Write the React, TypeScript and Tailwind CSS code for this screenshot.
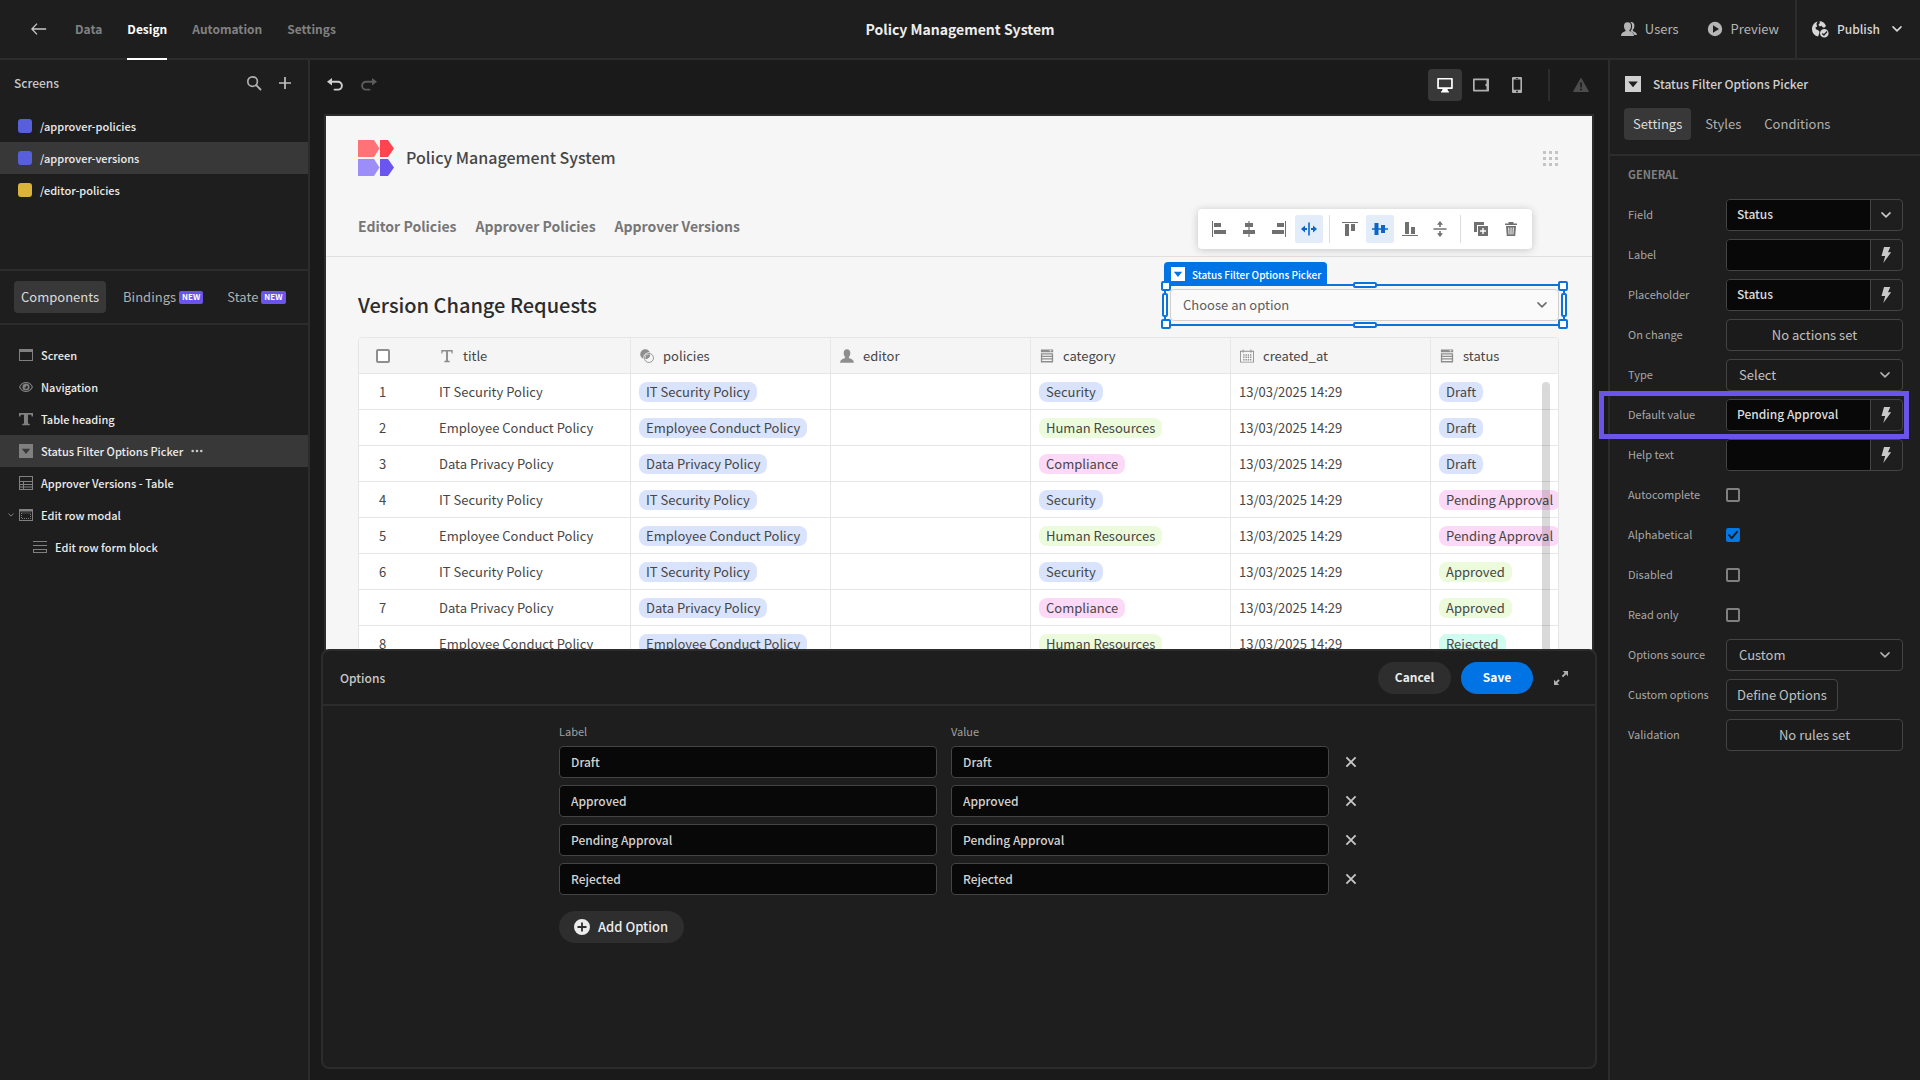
import type { ReactNode } from "react";

type IconProps = { className?: string };

function Icon({ className = "size-4", children, box = 16 }: IconProps & { children: ReactNode; box?: number }) {
  return (
    <svg viewBox={`0 0 ${box} ${box}`} className={`shrink-0 ${className}`} fill="currentColor" aria-hidden="true">
      {children}
    </svg>
  );
}

const Chevron = ({ className = "size-4" }: IconProps) => (
  <Icon className={className}>
    <path d="M3.4 5.6 8 10.2l4.6-4.6" fill="none" stroke="currentColor" strokeWidth="1.8" strokeLinecap="round" strokeLinejoin="round" />
  </Icon>
);
const ArrowLeft = () => (
  <Icon className="size-4">
    <path d="M15.200 8H1.200M6 2.600.9 8 6 13.400" fill="none" stroke="currentColor" strokeWidth="1.300" />
  </Icon>
);
const UsersIcon = () => (
  <Icon className="size-4">
    <path d="M10 1c2.300 0 3.700 1.700 3.400 4.200-.2 1.900-.9 2.900-1.500 3.600-.3.5-.2 1.100.3 1.400 1.800.8 3.600 1.400 3.800 3.800h-2.600c-.5-2-2-2.900-4-3.800.9-1 1.700-2.700 1.700-4.900 0-2.200-.8-3.600-2.200-4.200.3-.1.700-.1 1.100-.1z" />
    <path d="M6.500 1.300c2.400 0 3.700 1.600 3.500 4.100-.1 1.700-.8 2.800-1.400 3.500-.4.600-.3 1.200.3 1.400 2.200 1 3.900 1.700 4.100 4.700H0c.2-3 1.900-3.700 4.100-4.700.6-.2.700-.8.3-1.400C3.800 8.200 3.100 7.100 3 5.400c-.2-2.500 1.100-4.100 3.500-4.100z" />
  </Icon>
);
const UserIcon = ({ className = "size-4" }: IconProps) => (
  <Icon className={className}>
    <path d="M8 .3c2.600 0 4 2 3.800 4.700-.1 1.800-.8 3-1.500 3.900-.4.600-.3 1.400.4 1.600 2.600.9 5 1.600 5.200 5.200H.1c.2-3.600 2.600-4.300 5.200-5.200.7-.2.8-1 .4-1.600-.7-.9-1.400-2.100-1.500-3.900C4 2.300 5.400.3 8 .3z" />
  </Icon>
);
const PlayCircle = () => (
  <Icon className="size-4">
    <path fillRule="evenodd" d="M8 .8a7.200 7.200 0 1 0 0 14.400A7.200 7.200 0 0 0 8 .8zM6 4.300v7.400L12 8z" />
  </Icon>
);
const GlobeCheck = () => (
  <Icon className="size-[18px]" box={18}>
    <path d="M8.400 1.200A7.200 7.200 0 0 1 15 6l-1.800 1.800-1.700-.6-.8-1.500-2 .7L7.400 4.800 8.900 3z" />
    <path d="M6.600 1.600 5.400 4 6.200 6.500 4.400 7.600 5 9.300l2.200 1 1.300 1.500-.4 2-1 2.600A7.300 7.300 0 0 1 1 9.200C1 5.300 3.400 2.400 6.600 1.600z" />
    <path fillRule="evenodd" d="M13.300 9a4.300 4.300 0 1 0 0 8.600 4.300 4.300 0 0 0 0-8.600zm2.300 2.100.9.800-3.500 4-2.200-2 .8-.9 1.300 1.100z" />
  </Icon>
);
const SearchIcon = () => (
  <Icon className="size-4">
    <circle cx="6.600" cy="6.600" r="4.800" fill="none" stroke="currentColor" strokeWidth="1.700" />
    <path d="m10.200 10.200 4.300 4.300" stroke="currentColor" strokeWidth="1.900" strokeLinecap="round" />
  </Icon>
);
const PlusIcon = () => (
  <Icon className="size-4">
    <path d="M8 2v12M2 8h12" stroke="currentColor" strokeWidth="1.700" />
  </Icon>
);
const UndoIcon = ({ className = "size-4" }: IconProps) => (
  <Icon className={className}>
    <path d="M5 1v7.600L0 4.800z" />
    <path d="M4 4.800h7a3.900 3.900 0 0 1 0 7.800H7.500" fill="none" stroke="currentColor" strokeWidth="1.900" strokeLinecap="round" />
  </Icon>
);
const DesktopIcon = () => (
  <Icon className="size-4">
    <path fillRule="evenodd" d="M1 1h14a.8.8 0 0 1 .8.8v9.400a.8.8 0 0 1-.8.800h-4.500l.5 2 1 .5v1H4v-1l1-.5.5-2H1a.8.8 0 0 1-.8-.8V1.800A.8.8 0 0 1 1 1zm.9 1.600v7.700h12.200V2.600z" />
  </Icon>
);
const TabletIcon = () => (
  <Icon className="size-4">
    <path fillRule="evenodd" d="M.8 1.500h14.400a.8.8 0 0 1 .8.800v11.400a.8.800 0 0 1-.8.8H.8a.8.8 0 0 1-.8-.8V2.300a.8.8 0 0 1 .8-.8zm.9 1.700v9.600h11.800V9.200a1.200 1.200 0 0 1 0-2.400V3.200z" />
  </Icon>
);
const PhoneIcon = () => (
  <Icon className="size-4">
    <path fillRule="evenodd" d="M4 0h8a1 1 0 0 1 1 1v14a1 1 0 0 1-1 1H4a1 1 0 0 1-1-1V1a1 1 0 0 1 1-1zm.6 2.400v10.400h6.800V2.400zM6.800 1v.7h2.400V1zM8 13.600a.9.900 0 1 0 0 1.800.9.9 0 0 0 0-1.800z" />
  </Icon>
);
const WarningIcon = () => (
  <Icon className="size-4">
    <path fillRule="evenodd" d="M8.600 1.400 15.700 14a.7.7 0 0 1-.6 1H.9a.7.7 0 0 1-.6-1L7.400 1.400a.7.7 0 0 1 1.200 0zM7.100 5.400l.2 5h1.400l.2-5zM8 11.400a1 1 0 1 0 0 2 1 1 0 0 0 0-2z" />
  </Icon>
);
const PickerIcon = ({ className = "size-4" }: IconProps) => (
  <Icon className={className}>
    <path fillRule="evenodd" d="M0 0h16v16H0zM3.200 5.500 8 11.300l4.800-5.800z" />
  </Icon>
);
const ScreenIcon = () => (
  <Icon className="size-[14px]" box={14}>
    <path fillRule="evenodd" d="M0 1h14v12H0zm1 3v8h12V4z" />
  </Icon>
);
const EyeIcon = () => (
  <Icon className="size-[14px]" box={14}>
    <path d="M.6 7C2 4 4.300 2.500 7 2.500S12 4 13.400 7C12 10 9.700 11.500 7 11.500S2 10 .6 7z" fill="none" stroke="currentColor" strokeWidth="1.100" />
    <path fillRule="evenodd" d="M7 3.400a3.600 3.600 0 1 0 0 7.200 3.600 3.600 0 0 0 0-7.200zm.2 2A1.700 1.700 0 1 1 5.500 7.400l1.700-.2z" />
  </Icon>
);
const HeadingIcon = () => (
  <Icon className="size-[14px]">
    <path d="M0 1h16v4h-1.500L14 3.200h-3.700v9.800l2 .7v1.300H3.700v-1.300l2-.7V3.200H2L1.500 5H0z" />
  </Icon>
);
const TextIcon = ({ className = "size-4" }: IconProps) => (
  <Icon className={className}>
    <path d="M1.500 1h13v4h-1.200l-.5-2.200H9.100v10.400l2 .6v1.200H4.900v-1.200l2-.6V2.800H3.200L2.700 5H1.500z" />
  </Icon>
);
const TableIcon = () => (
  <Icon className="size-[14px]" box={14}>
    <path fillRule="evenodd" d="M0 0h14v14H0zm1 1v4h12V1zm0 5v2h3V6zm4 0v2h8V6zM1 9v1.500h3V9zm4 0v1.500h8V9zm-4 2.500V13h3v-1.500zm4 0V13h8v-1.500z" />
  </Icon>
);
const ModalIcon = () => (
  <Icon className="size-[14px]" box={14}>
    <path fillRule="evenodd" d="M0 1h14v12H0zm1 2.500V12h12V3.500z" />
    <path d="M2.500 5h9v5.500h-9z" fill="none" stroke="currentColor" strokeDasharray="1 1" />
  </Icon>
);
const FormIcon = () => (
  <Icon className="size-[14px]" box={14}>
    <path fillRule="evenodd" d="M0 1h14v1H0zm0 4h14v1H0zm0 4h14v4H0zm1 1v2h12v-2z" />
  </Icon>
);
const Ellipsis = () => (
  <Icon className="size-3" box={12}>
    <circle cx="1.700" cy="6" r="1.300" /><circle cx="6" cy="6" r="1.300" /><circle cx="10.300" cy="6" r="1.300" />
  </Icon>
);
const RelationIcon = ({ className = "size-4" }: IconProps) => (
  <Icon className={className}>
    <circle cx="6" cy="6" r="5.700" />
    <circle cx="10.200" cy="10.200" r="5.200" fill="none" stroke="#f5f5f5" strokeWidth="2.600" />
    <circle cx="10.200" cy="10.200" r="5.200" fill="none" stroke="currentColor" strokeWidth="1" />
    <path d="M11.400 6.300a5.500 5.500 0 0 1-5 5.100A4.600 4.600 0 0 1 11.400 6.300z" />
  </Icon>
);
const ListIcon = ({ className = "size-4" }: IconProps) => (
  <Icon className={className}>
    <path fillRule="evenodd" d="M1 .5h14v3.300H1zm9.500 1 1.500 1.600 1.500-1.600zM1 4.800h14v10.700H1zm1.500 1.500v1.500h11V6.300zm0 2.900v1.500h11V9.200zm0 2.900v1.700h11v-1.700z" />
  </Icon>
);
const CalendarIcon = ({ className = "size-4" }: IconProps) => (
  <Icon className={className}>
    <path fillRule="evenodd" d="M0 2h3V.5h1V2h8V.5h1V2h3v13.500H0zm1 1v11.500h14V3h-2v1.200h-1V3H4v1.200H3V3z" />
    <path d="M4.400 6v7M7 6v7M9.600 6v7M12.200 6v7" stroke="currentColor" strokeWidth="1.500" strokeDasharray="1.600 1.100" />
  </Icon>
);
const Bolt = () => (
  <Icon className="size-4">
    <path d="M6 0h6.300L10 5.200h3.200L5.300 16l1.900-7H3.500z" />
  </Icon>
);
const CloseIcon = () => (
  <Icon className="size-4">
    <path d="m3.400 3.400 9.200 9.200m0-9.200-9.200 9.200" stroke="currentColor" strokeWidth="1.800" />
  </Icon>
);
const ExpandIcon = () => (
  <Icon className="size-4">
    <path d="M9.800 1H15v5.200l-1.900-1.900-3 3-1.400-1.400 3-3zM6.200 15H1V9.800l1.900 1.900 2.400-2.400 1.400 1.400-2.400 2.400z" />
  </Icon>
);
const AddCircle = () => (
  <Icon className="size-4">
    <path fillRule="evenodd" d="M8 0a8 8 0 1 0 0 16A8 8 0 0 0 8 0zM7.100 3.500h1.800v3.600h3.600v1.800H8.900v3.600H7.100V8.900H3.500V7.100h3.600z" />
  </Icon>
);
const Logo = () => (
  <svg viewBox="0 0 36 36" className="size-9 shrink-0" role="img" aria-label="Policy Management System logo">
    <path d="M0 0h16l5.500 8.500L16 17H0z" fill="#ff7376" />
    <path d="M22 0h8l6 8.500-6 8.500h-8z" fill="#ff4450" />
    <path d="M0 19h16l5.500 8.500L16 36H0z" fill="#9d8df8" />
    <path d="M22 19h8l6 8.500-6 8.500h-8z" fill="#6a55f0" />
  </svg>
);

const screens = [
  { name: "/approver-policies", color: "bg-[#575fdb]" },
  { name: "/approver-versions", color: "bg-[#575fdb]", active: true },
  { name: "/editor-policies", color: "bg-[#d9b33a]" },
];

const tree: { name: string; icon: ReactNode; active?: boolean; open?: boolean; nested?: boolean }[] = [
  { name: "Screen", icon: <ScreenIcon /> },
  { name: "Navigation", icon: <EyeIcon /> },
  { name: "Table heading", icon: <HeadingIcon /> },
  { name: "Status Filter Options Picker", icon: <PickerIcon className="size-[14px]" />, active: true },
  { name: "Approver Versions - Table", icon: <TableIcon /> },
  { name: "Edit row modal", icon: <ModalIcon />, open: true },
  { name: "Edit row form block", icon: <FormIcon />, nested: true },
];

const pill: Record<string, string> = {
  Security: "bg-[#d9e3fb]",
  "Human Resources": "bg-[#ecfbdc]",
  Compliance: "bg-[#fcd9f6]",
  Draft: "bg-[#d9e3fb]",
  "Pending Approval": "bg-[#fcd9f6]",
  Approved: "bg-[#ecfbdc]",
  Rejected: "bg-[#d0fbef]",
};

const rows = [
  ["IT Security Policy", "Security", "Draft"],
  ["Employee Conduct Policy", "Human Resources", "Draft"],
  ["Data Privacy Policy", "Compliance", "Draft"],
  ["IT Security Policy", "Security", "Pending Approval"],
  ["Employee Conduct Policy", "Human Resources", "Pending Approval"],
  ["IT Security Policy", "Security", "Approved"],
  ["Data Privacy Policy", "Compliance", "Approved"],
  ["Employee Conduct Policy", "Human Resources", "Rejected"],
];

const options = ["Draft", "Approved", "Pending Approval", "Rejected"];

function NewTag() {
  return <span className="flex h-[13px] items-center rounded-[2px] bg-[#6a55e8] px-[3px] text-[8px] font-bold leading-none text-white">NEW</span>;
}

function Header() {
  return (
    <header className="grid h-[60px] shrink-0 grid-cols-[1fr_auto_1fr] border-b-2 border-[#2c2c2c] bg-[#1e1e1e]">
      <div className="flex items-center gap-7 pl-[31px]">
        <button aria-label="Back" className="text-[#c8c8c8]"><ArrowLeft /></button>
        <nav className="flex gap-[25px] self-stretch text-xs font-semibold text-[#818181]">
          <a href="#data" className="flex items-center">Data</a>
          <a href="#design" className="-mb-0.5 flex items-center border-b-2 border-white text-white">Design</a>
          <a href="#automation" className="flex items-center">Automation</a>
          <a href="#settings" className="flex items-center">Settings</a>
        </nav>
      </div>
      <h1 className="self-center text-sm font-semibold text-[#ededed]">Policy Management System</h1>
      <div className="flex items-center justify-end text-[13px] text-[#b5b5b5]">
        <button className="mr-7 flex items-center gap-2"><UsersIcon />Users</button>
        <button className="mr-4 flex items-center gap-2"><PlayCircle />Preview</button>
        <button className="flex items-center gap-2 self-stretch border-l-2 border-[#2c2c2c] pl-[14px] pr-4 text-xs font-medium text-[#d6d6d6]">
          <GlobeCheck />Publish<Chevron className="ml-0.5 size-[14px]" />
        </button>
      </div>
    </header>
  );
}

function LeftPanel() {
  return (
    <aside className="flex w-[310px] shrink-0 flex-col border-r-2 border-[#2c2c2c] bg-[#1e1e1e]">
      <section className="h-[211px] shrink-0 border-b-2 border-[#2c2c2c]">
        <div className="mb-1 flex h-[46px] items-center gap-[15px] pl-[14px] pr-[15px]">
          <h2 className="mr-auto text-xs font-medium text-[#c8c8c8]">Screens</h2>
          <button aria-label="Search screens" className="text-[#b0b0b0]"><SearchIcon /></button>
          <button aria-label="Add screen" className="text-[#c0c0c0]"><PlusIcon /></button>
        </div>
        <ul>
          {screens.map((s) => (
            <li key={s.name} className={`flex h-8 items-center gap-2 pl-[18px] text-[11px] font-medium text-[#ececec] ${s.active ? "bg-[#383838]" : ""}`}>
              <span className={`size-[14px] rounded-[3px] ${s.color}`} />
              <a href={"#" + s.name}>{s.name}</a>
            </li>
          ))}
        </ul>
      </section>
      <div className="flex shrink-0 gap-[10px] border-b-2 border-[#2c2c2c] py-[10px] pl-[14px] text-[13px] text-[#b0b0b0]">
        <button className="h-8 rounded bg-[#383838] px-[7px] text-[#dcdcdc]">Components</button>
        <button className="flex h-8 items-center gap-[3px] px-[7px]">Bindings<NewTag /></button>
        <button className="flex h-8 items-center gap-[3px] px-[7px]">State<NewTag /></button>
      </div>
      <ul className="pt-[14px]">
        {tree.map((t) => (
          <li
            key={t.name}
            className={`flex h-8 items-center gap-2 text-[11px] font-medium text-[#ececec] ${t.nested ? "pl-[33px]" : t.open ? "pl-[7px]" : "pl-[19px]"} ${t.active ? "bg-[#383838]" : ""}`}
          >
            {t.open && <Chevron className="-mr-1 size-2 text-[#8a8a8a]" />}
            <span className="text-[#808080]">{t.icon}</span>
            <a href={"#" + t.name.replace(/ /g, "-")}>{t.name}</a>
            {t.active && <button aria-label="More actions" className="text-[#c8c8c8]"><Ellipsis /></button>}
          </li>
        ))}
      </ul>
    </aside>
  );
}

function CanvasToolbar() {
  return (
    <div className="flex h-[54px] shrink-0 items-center pb-1 pl-[17px] pr-[19px] text-[#b0b0b0]">
      <button aria-label="Undo" className="mr-[18px] text-[#d0d0d0]"><UndoIcon /></button>
      <button aria-label="Redo" className="text-[#5c5c5c]"><UndoIcon className="size-4 -scale-x-100" /></button>
      <div className="ml-auto flex items-center gap-[2px]">
        <button aria-label="Desktop view" className="flex h-8 w-[34px] items-center justify-center rounded bg-[#383838] text-white"><DesktopIcon /></button>
        <button aria-label="Tablet view" className="flex h-8 w-[34px] items-center justify-center"><TabletIcon /></button>
        <button aria-label="Mobile view" className="flex h-8 w-[34px] items-center justify-center"><PhoneIcon /></button>
      </div>
      <div className="ml-[14px] mr-[23px] h-8 w-[2px] bg-[#2c2c2c]" />
      <button aria-label="Warnings" className="text-[#4c4c4c]"><WarningIcon /></button>
    </div>
  );
}

const alignTools: { label: string; d: string; active?: boolean; sep?: boolean }[] = [
  { label: "Align left", d: "M1 0h1v16H1zM3 2h7v4H3zM3 9h12v4H3z" },
  { label: "Align center", d: "M7.400 0h1.200v2H12v4H8.600v3H14v4H8.600v3H7.400v-3H2V9h5.400V6H4V2h3.400z" },
  { label: "Align right", d: "M14 0h1v16h-1zM6 2h7v4H6zM1 9h12v4H1z" },
  { label: "Stretch horizontally", d: "M7.200 1.500h1.600v13H7.200zM4 4.500v2.600h2v1.800H4v2.600L0 8zM12 4.500v2.600h-2v1.800h2v2.600L16 8z", active: true },
  { label: "Align top", d: "M0 1h16v1H0zM3 3h4v12H3zM9 3h4v7H9z", sep: true },
  { label: "Align middle", d: "M0 7.300h2.500V2h4v5.300H9V4h4v3.300h3v1.400h-3V12H9V8.700H6.500V14h-4V8.700H0z", active: true },
  { label: "Align bottom", d: "M0 14h16v1H0zM3 1h4v12H3zM9 6h4v7H9z" },
  { label: "Stretch vertically", d: "M1.500 7.200h13v1.600h-13zM8 0l3 3.800H8.800V6H7.200V3.800H5zM8 16l3-3.800H8.800V10H7.200v2.200H5z" },
  { label: "Duplicate", d: "M1 1h10v3H4v7H1zM5 5h10v10H5zm4.300 2v2.300H7v1.400h2.300V13h1.400v-2.300H13V9.300h-2.300V7z", sep: true },
  { label: "Delete", d: "M5.500 1h5v1.500H14V4H2V2.500h3.500zM3 5h10l-.8 10H3.800zm2.200 1.500.4 7h.9l-.3-7zm2.300 0v7h1v-7zm2.300 0-.3 7h.9l.4-7z" },
];

function AlignBar() {
  return (
    <div role="toolbar" aria-label="Component actions" className="absolute bottom-[72px] right-[27px] flex items-center rounded bg-white px-[7px] py-1.5 shadow-[0_1px_8px_rgba(0,0,0,0.2)]">
      {alignTools.map((t, i) => (
        <div key={t.label} className="flex items-center">
          {t.sep && <span className="mx-1.5 h-7 w-px bg-[#dcdcdc]" />}
          <button
            aria-label={t.label}
            className={`flex size-7 items-center justify-center rounded-[2px] ${t.active ? "bg-[#e3edf9] text-[#0b66c8]" : "text-[#707070]"} ${i + 1 < alignTools.length && !alignTools[i + 1].sep ? "mr-0.5" : ""}`}
          >
            <Icon className="size-4"><path fillRule="evenodd" d={t.d} /></Icon>
          </button>
        </div>
      ))}
    </div>
  );
}

function Selection() {
  return (
    <div className="pointer-events-none absolute -inset-x-[6px] -inset-y-[5px] border-2 border-[#0b74dc]">
      <div className="absolute -left-0.5 bottom-full flex h-6 items-center gap-[7px] whitespace-nowrap rounded-t bg-[#0074e4] pl-[7px] pr-1.5 text-[10px] font-medium text-white">
        <PickerIcon className="size-[14px]" />
        Status Filter Options Picker
      </div>
      <i className="absolute -left-[5px] -top-[5px] size-[10px] rounded-[2px] border-2 border-[#0b74dc] bg-white" />
      <i className="absolute -right-[5px] -top-[5px] size-[10px] rounded-[2px] border-2 border-[#0b74dc] bg-white" />
      <i className="absolute -bottom-[5px] -left-[5px] size-[10px] rounded-[2px] border-2 border-[#0b74dc] bg-white" />
      <i className="absolute -bottom-[5px] -right-[5px] size-[10px] rounded-[2px] border-2 border-[#0b74dc] bg-white" />
      <i className="absolute -top-1 left-1/2 h-1.5 w-6 -translate-x-1/2 rounded-[2px] border-2 border-[#0b74dc] bg-white" />
      <i className="absolute -bottom-1 left-1/2 h-1.5 w-6 -translate-x-1/2 rounded-[2px] border-2 border-[#0b74dc] bg-white" />
      <i className="absolute -left-1 top-1/2 h-6 w-1.5 -translate-y-1/2 rounded-[2px] border-2 border-[#0b74dc] bg-white" />
      <i className="absolute -right-1 top-1/2 h-6 w-1.5 -translate-y-1/2 rounded-[2px] border-2 border-[#0b74dc] bg-white" />
    </div>
  );
}

const columns: { name: string; icon: ReactNode }[] = [
  { name: "title", icon: <TextIcon className="size-[14px]" /> },
  { name: "policies", icon: <RelationIcon className="size-[14px]" /> },
  { name: "editor", icon: <UserIcon className="size-[14px]" /> },
  { name: "category", icon: <ListIcon className="size-[14px]" /> },
  { name: "created_at", icon: <CalendarIcon className="size-[14px]" /> },
  { name: "status", icon: <ListIcon className="size-[14px]" /> },
];

function Pill({ color, children }: { color: string; children: ReactNode }) {
  return <span className={`inline-flex h-5 items-center rounded-lg px-[7px] align-middle ${color}`}>{children}</span>;
}

function DataTable() {
  const cell = "overflow-hidden border-b border-[#e6e6e6] py-0 pl-2 whitespace-nowrap";
  return (
    <div className="relative overflow-hidden rounded-t border border-[#e6e6e6] bg-white">
      <table className="w-full table-fixed border-separate border-spacing-0 text-left text-[13px] text-[#464646]">
        <colgroup>
          <col className="w-[72px]" />
          <col className="w-[200px]" />
          <col className="w-[200px]" />
          <col className="w-[200px]" />
          <col className="w-[200px]" />
          <col className="w-[200px]" />
          <col />
        </colgroup>
        <thead>
          <tr className="h-9 bg-[#f5f5f5]">
            <th className="border-b border-[#e6e6e6] p-0 pl-[17px]">
              <input type="checkbox" aria-label="Select all rows" className="block size-[14px] appearance-none rounded-[2px] border-2 border-[#8e8e8e] bg-white" />
            </th>
            {columns.map((c, i) => (
              <th key={c.name} className={`${cell} font-normal ${i < 5 ? "border-r" : ""}`}>
                <span className="flex items-center gap-[9px] pl-px"><span className="text-[#8e8e8e]">{c.icon}</span>{c.name}</span>
              </th>
            ))}
          </tr>
        </thead>
        <tbody>
          {rows.map(([title, category, status], i) => (
            <tr key={i} className="h-9">
              <td className="border-b border-[#e6e6e6] p-0 pl-5">{i + 1}</td>
              <td className={`${cell} border-r`}>{title}</td>
              <td className={`${cell} border-r`}><Pill color="bg-[#d9e3fb]">{title}</Pill></td>
              <td className={`${cell} border-r`} />
              <td className={`${cell} border-r`}><Pill color={pill[category]}>{category}</Pill></td>
              <td className={`${cell} border-r`}>13/03/2025 14:29</td>
              <td className={cell}><Pill color={pill[status]}>{status}</Pill></td>
            </tr>
          ))}
        </tbody>
      </table>
      <div className="absolute bottom-0 right-2 top-11 w-2 rounded-t bg-black/15" />
    </div>
  );
}

function Canvas() {
  return (
    <div className="mx-[14px] min-h-0 flex-1 overflow-hidden border-2 border-b-0 border-[#2c2c2c] bg-[#f6f6f6]">
      <div className="border-b border-[#e0e0e0] pl-8 pr-[34px] pt-6">
        <div className="flex h-9 items-center gap-3">
          <Logo />
          <h2 className="pb-0.5 text-base font-medium text-[#464646]">Policy Management System</h2>
          <button aria-label="Apps" className="ml-auto grid grid-cols-3 gap-[3px]">
            {Array.from({ length: 9 }, (_, i) => <span key={i} className="size-[3px] bg-[#c4c4c4]" />)}
          </button>
        </div>
        <nav className="flex h-20 items-end gap-[19px] pb-[18px] text-sm font-semibold leading-6 text-[#767676]">
          <a href="#editor-policies">Editor Policies</a>
          <a href="#approver-policies">Approver Policies</a>
          <a href="#approver-versions">Approver Versions</a>
        </nav>
      </div>
      <div className="pl-8 pr-[33px] pt-8">
        <div className="mb-4 flex h-8 items-center justify-between">
          <h3 className="text-xl font-medium text-[#2c2c2c]">Version Change Requests</h3>
          <div className="relative w-[389px]">
            <select aria-label="Status filter" className="h-8 w-full appearance-none rounded border border-[#d0d0d0] bg-[#fafafa] pl-3 text-[13px] text-[#5c5c5c]">
              <option>Choose an option</option>
            </select>
            <span className="pointer-events-none absolute inset-y-0 right-[10px] flex items-center text-[#6e6e6e]"><Chevron className="size-[14px]" /></span>
            <Selection />
            <AlignBar />
          </div>
        </div>
        <DataTable />
      </div>
    </div>
  );
}

function OptionsDrawer() {
  const field = "h-8 min-w-0 flex-1 rounded border border-[#444] bg-[#080808] px-[11px] pb-0.5 text-xs font-medium text-[#d2d2d2]";
  return (
    <section className="relative -mt-2 mx-[11px] mb-[11px] h-[420px] shrink-0 rounded-lg border-2 border-[#2c2c2c] bg-[#1e1e1e]">
      <div className="flex h-[55px] items-center border-b-2 border-[#2c2c2c] pl-[17px] pr-[26px]">
        <h2 className="mr-auto text-xs font-medium text-[#c8c8c8]">Options</h2>
        <button className="mr-[10px] h-8 w-[73px] rounded-full bg-[#2e2e2e] pb-0.5 text-xs font-semibold text-[#ececec]">Cancel</button>
        <button className="mr-5 h-8 w-[72px] rounded-full bg-[#0074e4] pb-0.5 text-xs font-semibold text-white">Save</button>
        <button aria-label="Expand" className="text-[#b0b0b0]"><ExpandIcon /></button>
      </div>
      <div className="mx-auto max-w-[800px] pt-4">
        <div className="mb-1.5 flex gap-[14px] text-[11px] leading-[18px] text-[#a0a0a0]">
          <span className="flex-1">Label</span>
          <span className="flex-1">Value</span>
          <span className="w-4" />
        </div>
        <div className="flex flex-col gap-[7px]">
          {options.map((o) => (
            <div key={o} className="flex items-center gap-[14px]">
              <input aria-label={`${o} label`} defaultValue={o} className={field} />
              <input aria-label={`${o} value`} defaultValue={o} className={field} />
              <button aria-label={`Remove ${o}`} className="text-[#c8c8c8]"><CloseIcon /></button>
            </div>
          ))}
        </div>
        <button className="mt-4 flex h-8 items-center gap-2 rounded-full bg-[#2e2e2e] pl-[15px] pr-4 text-[13px] font-medium text-[#ececec]">
          <AddCircle />Add Option
        </button>
      </div>
    </section>
  );
}

function Row({ label, id, children, highlight }: { label: string; id: string; children: ReactNode; highlight?: boolean }) {
  return (
    <div className="relative flex h-10 items-center pl-[18px] pr-[17px]">
      <label htmlFor={id} className="w-[98px] shrink-0 pb-0.5 text-[11px] text-[#a8a8a8]">{label}</label>
      {children}
      {highlight && <div className="pointer-events-none absolute -inset-y-1 -left-[11px] right-[11px] z-10 border-[5px] border-[#6a55e8]" />}
    </div>
  );
}

function TextField({ id, value = "", icon }: { id: string; value?: string; icon?: ReactNode }) {
  return (
    <div className="flex h-8 min-w-0 flex-1 overflow-hidden rounded border border-[#444]">
      <input id={id} defaultValue={value} className="min-w-0 flex-1 bg-[#080808] pb-0.5 pl-[10px] text-xs font-medium text-[#dcdcdc]" />
      <button aria-label={`${id} options`} className="flex w-8 items-center justify-center border-l border-[#444] pr-0.5 text-[#c8c8c8]">{icon ?? <Bolt />}</button>
    </div>
  );
}

function SelectField({ id, value }: { id: string; value: string }) {
  return (
    <div className="relative min-w-0 flex-1">
      <select id={id} className="h-8 w-full appearance-none rounded border border-[#444] bg-[#1b1b1b] pl-3 text-[13px] text-[#c0c0c0]">
        <option>{value}</option>
      </select>
      <span className="pointer-events-none absolute inset-y-0 right-[11px] flex items-center text-[#b0b0b0]"><Chevron className="size-[14px]" /></span>
    </div>
  );
}

function Check({ id, checked }: { id: string; checked?: boolean }) {
  return (
    <span className="relative flex">
      <input id={id} type="checkbox" defaultChecked={checked} className="peer size-[14px] appearance-none rounded-[2px] border-2 border-[#808080] checked:border-[#0078e6] checked:bg-[#0078e6]" />
      <svg viewBox="0 0 14 14" className="pointer-events-none absolute inset-0 hidden size-[14px] peer-checked:block" aria-hidden="true">
        <path d="m3 7.200 2.700 3L11 3.800" fill="none" stroke="#1b1b1b" strokeWidth="1.900" strokeLinecap="round" strokeLinejoin="round" />
      </svg>
    </span>
  );
}

function RightPanel() {
  const button = "h-8 rounded border border-[#444] bg-[#1b1b1b] text-[13px] text-[#c0c0c0]";
  return (
    <aside className="w-[312px] shrink-0 border-l-2 border-[#2c2c2c] bg-[#1e1e1e]">
      <div className="border-b-2 border-[#2c2c2c] pb-[14px]">
        <h2 className="flex h-12 items-center gap-3 pl-[15px] text-xs font-medium text-[#d0d0d0]">
          <PickerIcon className="size-4" />
          Status Filter Options Picker
        </h2>
        <div className="flex gap-[5px] pl-[14px] text-[13px] text-[#b0b0b0]">
          <button className="h-8 rounded bg-[#383838] px-[9px] text-[#dcdcdc]">Settings</button>
          <button className="h-8 px-[9px]">Styles</button>
          <button className="h-8 px-[9px]">Conditions</button>
        </div>
      </div>
      <h3 className="flex h-[39px] items-center pb-0.5 pl-[18px] text-[11px] font-semibold text-[#808080]">GENERAL</h3>
      <Row label="Field" id="field"><TextField id="field" value="Status" icon={<Chevron className="size-[14px]" />} /></Row>
      <Row label="Label" id="label"><TextField id="label" /></Row>
      <Row label="Placeholder" id="placeholder"><TextField id="placeholder" value="Status" /></Row>
      <Row label="On change" id="on-change"><button id="on-change" className={`${button} flex-1`}>No actions set</button></Row>
      <Row label="Type" id="type"><SelectField id="type" value="Select" /></Row>
      <Row label="Default value" id="default-value" highlight><TextField id="default-value" value="Pending Approval" /></Row>
      <Row label="Help text" id="help-text"><TextField id="help-text" /></Row>
      <Row label="Autocomplete" id="autocomplete"><Check id="autocomplete" /></Row>
      <Row label="Alphabetical" id="alphabetical"><Check id="alphabetical" checked /></Row>
      <Row label="Disabled" id="disabled"><Check id="disabled" /></Row>
      <Row label="Read only" id="read-only"><Check id="read-only" /></Row>
      <Row label="Options source" id="options-source"><SelectField id="options-source" value="Custom" /></Row>
      <Row label="Custom options" id="custom-options"><button id="custom-options" className={`${button} px-[10px]`}>Define Options</button></Row>
      <Row label="Validation" id="validation"><button id="validation" className={`${button} flex-1`}>No rules set</button></Row>
    </aside>
  );
}

export default function App() {
  return (
    <div className="flex h-screen flex-col overflow-hidden bg-[#1a1a1a] font-['Noto_Sans_CJK_SC','Noto_Sans',sans-serif]">
      <Header />
      <div className="flex min-h-0 flex-1">
        <LeftPanel />
        <main className="flex min-w-0 flex-1 flex-col">
          <CanvasToolbar />
          <Canvas />
          <OptionsDrawer />
        </main>
        <RightPanel />
      </div>
    </div>
  );
}
